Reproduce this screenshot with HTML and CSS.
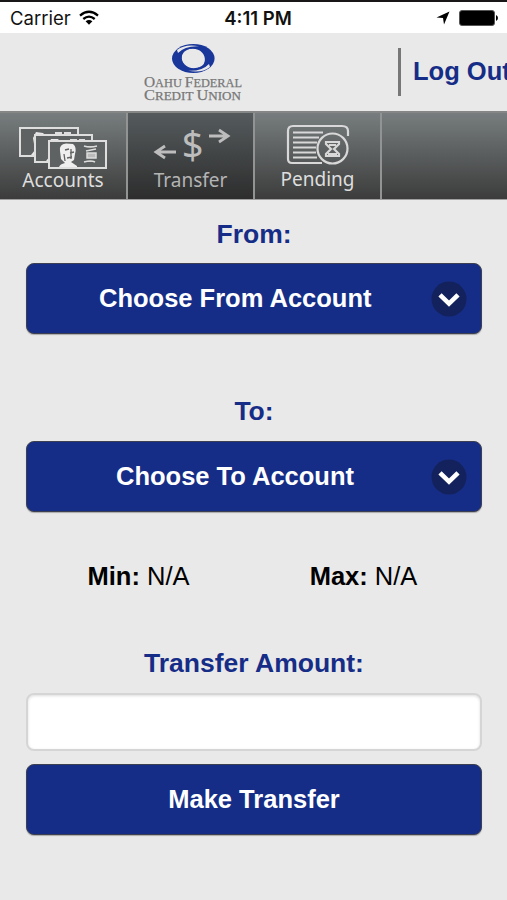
FILE: index.html
```html
<!DOCTYPE html>
<html lang="en">
<head>
<meta charset="utf-8">
<title>Transfer</title>
<link rel="stylesheet" href="styles.css">
</head>
<body>
<div class="status">
  <div class="status-left">
    <span class="carrier">Carrier</span>
    <svg class="wifi" width="20" height="16" viewBox="0 0 20 16"><g fill="none" stroke="#000" stroke-width="2.3"><path d="M1 5.6Q10-2 19 5.6"/><path d="M4.3 9Q10 4.2 15.7 9"/></g><path d="M6.6 11.3Q10 8.6 13.4 11.3L10 14.8Z"/></svg>
  </div>
  <span class="time">4:11 PM</span>
  <div class="status-right">
    <svg width="14" height="14" viewBox="0 0 14 14"><path d="M13.5.5L8 13.5L7 7L.5 6.4Z"/></svg>
    <svg width="39" height="16" viewBox="0 0 39 16"><rect x=".5" y=".5" width="35" height="15" rx="2.5" fill="#000" stroke="#555" stroke-width="1"/><path d="M37 5Q39 6 39 8T37 11Z"/></svg>
  </div>
</div>
<header class="header">
  <svg class="logo" width="104" height="62" viewBox="0 0 104 62">
    <ellipse cx="51.3" cy="15.5" rx="21.3" ry="14.5" fill="#19369a"/>
    <ellipse cx="51.5" cy="15.5" rx="12" ry="10.3" fill="#e9e9e9"/>
    <path d="M47 1.8C58 2 66 8 65.5 18C65.2 23 62 26 58.5 27.3C63 21 65 15 60 9.5C56.5 5.7 50 4.8 44 7.2Q48 4 55 4" fill="#19369a"/>
    <path d="M55.8 29.2C45 29 36.5 23 37 13C37.3 8 40.5 5 44 3.7C39.5 10 37.7 16 42.7 21.5C46.2 25.3 52.5 26.2 58.5 23.8Q55 27 48 27" fill="#19369a"/>
    <path d="M35 7Q43 .5 57 3.2Q43 2.5 36 10Z M68 24Q60 30.5 46 27.8Q60 28.500 67 21Z" fill="#e9e9e9"/>
    <g class="logo-text">
      <text x="2" y="44.300" textLength="98" lengthAdjust="spacingAndGlyphs"><tspan class="cap">O</tspan>AHU <tspan class="cap">F</tspan>EDERAL</text>
      <text x="2" y="57" textLength="97" lengthAdjust="spacingAndGlyphs"><tspan class="cap">C</tspan>REDIT <tspan class="cap">U</tspan>NION</text>
    </g>
  </svg>
  <a class="logout">Log Out</a>
</header>
<nav class="tabs">
  <a class="tab">
    <svg width="92" height="46" viewBox="0 0 92 46">
      <g fill="#5f6262" stroke="#dedede" stroke-width="2">
        <rect x="3" y="3" width="58" height="28"/><path d="M14 30L18 25L16 13L19 7L26 8L30 12V30Z" fill="#e8e8e8" stroke="none"/><path d="M38 8h17" stroke-dasharray="7 2"/>
        <rect x="18" y="10" width="57" height="27"/><path d="M29 36L33 31L31 20L34 14L41 14L45 19V36Z" fill="#e8e8e8" stroke="none"/><path d="M53 15h15" stroke-dasharray="7 2"/>
        <rect x="32" y="16" width="57" height="27"/>
      </g>
      <path d="M42 42Q43 39 48 38L44 34L43 26Q42 19 49 18.500L56 19Q60 22 58 29L57 35L54 37L60 41V42Z" fill="#eee"/>
      <path d="M48 25l4-1M53 28l4-1M50 33l5-1M54 24v10M47 29l1 7" stroke="#606363" stroke-width="1.300" fill="none"/>
      <path d="M67 21q6 2 13 0M69 26l10-2M70 28h9v5h-9zM67 37q7-2 11 0" stroke="#ddd" stroke-width="1.500" fill="#bbb"/>
    </svg>
    <span>Accounts</span>
  </a>
  <a class="tab active">
    <svg width="80" height="46" viewBox="0 0 80 46">
      <g fill="none" stroke="#bdbdbd" stroke-width="2.800"><path d="M25 27H6M14 21L5 27L14 33M58 11H77M68 5L77 11L68 17"/></g>
      <text class="dollar" x="41.500" y="34" text-anchor="middle">$</text>
    </svg>
    <span>Transfer</span>
  </a>
  <a class="tab">
    <svg width="68" height="46" viewBox="0 0 68 46">
      <g fill="none" stroke="#d8d8d8" stroke-width="2.200"><path d="M38 39H8Q4 39 4 35V7Q4 2 9 2H58Q64 2 64 7V12"/><path d="M9 8.500H39M9 13.500H35M9 18.500H33M9 23.500H32M9 28.500H32M9 33.500H33"/><circle cx="48.500" cy="24.500" r="15"/><path d="M42 18H55V20L50 25L55 30V32H42V30L47 25L42 20ZM45 21H52M44 30H53"/></g>
    </svg>
    <span>Pending</span>
  </a>
  <div class="rest"></div>
</nav>
<main class="form">
  <label class="label from"><span>From:</span></label>
  <button class="button select"><span class="from-text">Choose From Account</span><svg width="36" height="36" viewBox="0 0 36 36"><circle cx="18" cy="18" r="17.500" fill="#13225c"/><path d="M9 13.800L18 22.600L27 13.800" fill="none" stroke="#fff" stroke-width="4.600"/></svg></button>
  <label class="label to"><span>To:</span></label>
  <button class="button select"><span class="to-text">Choose To Account</span><svg width="36" height="36" viewBox="0 0 36 36"><circle cx="18" cy="18" r="17.500" fill="#13225c"/><path d="M9 13.800L18 22.600L27 13.800" fill="none" stroke="#fff" stroke-width="4.600"/></svg></button>
  <div class="limits"><span><b>Min:</b> N/A</span><span><b>Max:</b> N/A</span></div>
  <label class="label amount" for="amount"><span>Transfer Amount:</span></label>
  <input class="input" id="amount" type="text">
  <button class="button"><span>Make Transfer</span></button>
</main>
</body>
</html>
```

FILE: styles.css
```css
* { box-sizing: border-box; }
body { margin: 0; height: 900px; overflow: hidden; background: #e9e9e9; font-family: "Liberation Sans", Arial, sans-serif; }
.status { height: 33px; border-top: 2px solid #1a1718; background: #fff; display: grid; grid-template-columns: 1fr auto 1fr; align-items: center; padding: 0 9px 0 10px; font: 18.5px Inter, sans-serif; color: #111; }
.status-left, .status-right { display: flex; align-items: center; }
.status-left { gap: 8px; }
.status-right { justify-content: flex-end; gap: 9px; }
.time { font-weight: 600; padding-left: 8px; }
.header { height: 78px; display: flex; justify-content: space-between; align-items: center; padding-left: 142px; }
.logo { flex: none; margin-top: 4px; }
.logo-text { font: 12px "Liberation Serif", serif; fill: #777; stroke: #777; stroke-width: .25px; }
.cap { font-size: 15px; }
.logout { width: 109px; height: 48px; border-left: 3px solid #777; padding-left: 12px; color: #162d87; font-size: 25.5px; font-weight: bold; line-height: 47px; white-space: nowrap; }
.tabs { height: 89px; display: flex; border-top: 2px solid #858787; border-bottom: 1px solid #a0a0a0; }
.tab { width: 127px; flex: none; display: flex; flex-direction: column; align-items: center; padding-top: 12px; border-right: 2px solid #929494; background: linear-gradient(#777d7e, #3c3c3c); color: #dedede; font: 19px/19px "Noto Sans", sans-serif; }
.tab:first-child { width: 128px; }
.tab:nth-child(3) { width: 127px; }
.tab:nth-child(3) svg { margin-top: -1px; }
.tab.active { background: linear-gradient(#555b5d, #2d2d2d); color: #b4b4b4; }
.tab svg { flex: none; }
.dollar { font: 38px "Noto Sans", sans-serif; fill: #bdbdbd; }
.rest { flex: 1; background: linear-gradient(#777d7e, #3c3c3c); }
.form { display: flex; flex-direction: column; padding: 0 25px 0 26px; }
.label { height: 63px; display: flex; justify-content: center; align-items: center; color: #162d87; font-size: 26.5px; font-weight: bold; }
.label span { margin-top: 5px; }
.to { height: 107px; }
.to span { margin-top: 48px; }
.amount { height: 61px; }
.amount span { margin-top: 2px; }
.button { width: 456px; height: 71px; padding: 0; border: 1px solid #3d4050; border-radius: 8px; background: #162d87; color: #fff; font: bold 25.5px "Liberation Sans", Arial, sans-serif; box-shadow: 0 1px 1px #aaa; }
.select { display: flex; align-items: center; justify-content: space-between; padding: 0 14px 0 72px; }
.to-text { margin-left: 17px; }
.limits { height: 120px; display: grid; grid-template-columns: 1fr 1fr; align-items: center; justify-items: center; padding-top: 9px; font-size: 25.5px; color: #000; padding-right: 6px; }
.input { height: 58px; margin-bottom: 13px; border: 2px solid #d5d5d5; border-radius: 8px; background: #fff; box-shadow: inset 0 1px 3px #ddd; outline: none; font-size: 24px; }
```
